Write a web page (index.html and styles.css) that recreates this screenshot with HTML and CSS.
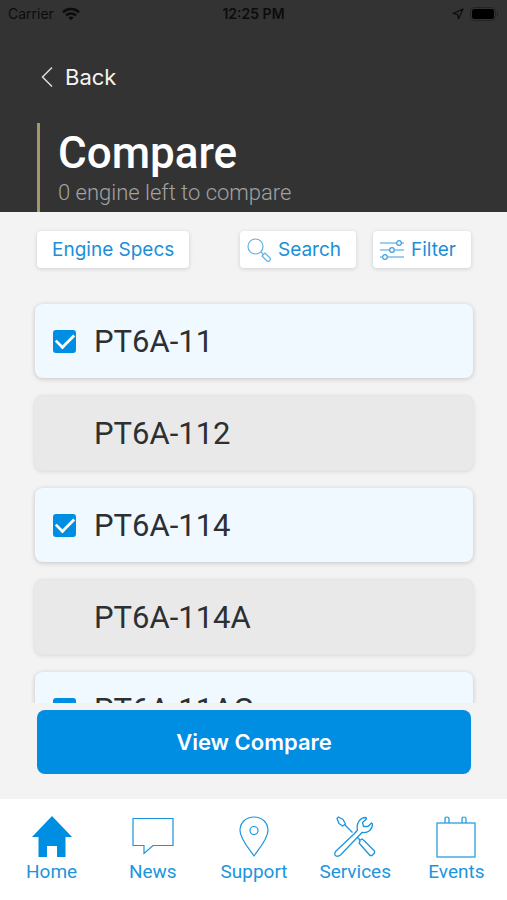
FILE: index.html
```html
<!DOCTYPE html>
<html lang="en">
<head>
    <meta charset="UTF-8">
    <meta name="viewport" content="width=device-width, initial-scale=1.0">
    <title>Compare</title>
    <link rel="stylesheet" href="styles.css">
</head>
<body>
    <header class="header">
        <div class="status-bar">
            <div class="status-left">
                <span>Carrier</span>
                <svg width="18" height="14" viewBox="0 0 18 14" fill="none" stroke="#0c0c0c" stroke-width="2.6">
                    <path d="M1 5.2C5.5 1 12.5 1 17 5.2"/>
                    <path d="M4 8.4C6.8 5.8 11.2 5.8 14 8.4"/>
                    <path d="M6.3 10.4C7.8 9.2 10.2 9.2 11.7 10.4L9 13.2Z" fill="#0c0c0c" stroke="none"/>
                </svg>
            </div>
            <div class="status-time">12:25 PM</div>
            <div class="status-right">
                <svg width="12" height="12" viewBox="0 0 12 12" fill="none" stroke="#0c0c0c" stroke-width="1.2" stroke-linejoin="round">
                    <path d="M11 1L1 5.5L5.6 6.4L6.5 11Z"/>
                </svg>
                <svg width="29" height="14" viewBox="0 0 29 14">
                    <rect x="0.5" y="0.5" width="25" height="13" rx="4" fill="none" stroke="#242424"/>
                    <rect x="2" y="2" width="22" height="10" rx="2.5" fill="#000"/>
                    <path d="M27 4.5C28.6 5.3 28.6 8.7 27 9.5Z" fill="#242424"/>
                </svg>
            </div>
        </div>
        <a class="back" href="#">
            <svg width="12" height="22" viewBox="0 0 12 22" fill="none" stroke="#ddd" stroke-width="1.5">
                <path d="M11 1.5L1.5 11L11 20.5"/>
            </svg>
            Back
        </a>
        <div class="heading">
            <h1>Compare</h1>
            <p>0 engine left to compare</p>
        </div>
    </header>

    <main class="content">
        <div class="toolbar">
            <button class="tool tool-specs">Engine Specs</button>
            <button class="tool">
                <svg width="24" height="24" viewBox="0 0 24 24" fill="none" stroke="#5fb2e6" stroke-width="1.2">
                    <circle cx="8.5" cy="8.5" r="7.5"/>
                    <path d="M13.8 13.8L16.5 16.5"/>
                    <path d="M15 18L18 15L23 20Q24 21.2 22.7 22.7Q21.200 24 20 23Z"/>
                </svg>
                Search
            </button>
            <button class="tool">
                <svg width="24" height="20" viewBox="0 0 24 20" fill="#fff" stroke="#3aa0e0" stroke-width="1.2">
                    <path d="M0 3H24M0 10H24M0 17H24"/>
                    <circle cx="19" cy="3" r="2.3"/>
                    <circle cx="12" cy="10" r="2.3"/>
                    <circle cx="5" cy="17" r="2.3"/>
                </svg>
                Filter
            </button>
        </div>

        <div class="engine-list">
            <label class="engine"><input type="checkbox" checked>PT6A-11</label>
            <label class="engine"><input type="checkbox">PT6A-112</label>
            <label class="engine"><input type="checkbox" checked>PT6A-114</label>
            <label class="engine"><input type="checkbox">PT6A-114A</label>
            <label class="engine"><input type="checkbox" checked>PT6A-11AG</label>
        </div>

        <button class="view-compare">View Compare</button>
    </main>

    <nav class="tabs">
        <a href="#">
            <svg width="42" height="42" viewBox="0 0 42 42" fill="#008ee3">
                <path d="M21 0L41 21H34.5V41H26V30H16V41H7.5V21H1Z"/>
            </svg>
            Home
        </a>
        <a href="#">
            <svg width="42" height="42" viewBox="0 0 42 42" fill="none" stroke="#1c95de" stroke-width="1.2">
                <path d="M1 2.5H41V29.5H21L12 37.5V29.5H1Z"/>
            </svg>
            News
        </a>
        <a href="#">
            <svg width="42" height="42" viewBox="0 0 42 42" fill="none" stroke="#1c95de" stroke-width="1.2">
                <path d="M21 40C17 34 7 23 7 14.5C7 6.5 13 1 21 1S35 6.5 35 14.5C35 23 25 34 21 40Z"/>
                <circle cx="21" cy="14.5" r="4"/>
            </svg>
            Support
        </a>
        <a href="#">
            <svg width="42" height="42" viewBox="0 0 42 42" fill="none" stroke="#1c95de" stroke-width="1.3" stroke-linejoin="round">
                <path d="M4.5 1L9 3.5L11.5 8L8.5 10L5 7.5L3 2.5Z"/>
                <path d="M10.5 8.5L18.5 16.5M23 21L26 24"/>
                <path d="M1.5 35.500L20 18L23.500 14C22 7 26 1.500 32 1.500L32.500 3L28.500 6.500L29.500 10.500L34 10.500L37.500 7L38.500 8C38.500 13.500 34 17.500 28 16.500L7 38.500C3.500 41.500 -1 40.500 1.500 35.500Z"/>
                <path d="M25 27L26 25.500L25.500 24.500L28 23L30 24.500L40.500 35V37L38 39.500H36Z"/>
            </svg>
            Services
        </a>
        <a href="#">
            <svg width="42" height="42" viewBox="0 0 42 42" fill="none" stroke="#1c95de" stroke-width="1.2">
                <rect x="2" y="7" width="38" height="34"/>
                <path d="M10 7V3Q10 1 12 1T14 3V7M27 7V3Q27 1 29 1T31 3V7"/>
            </svg>
            Events
        </a>
    </nav>
</body>
</html>
```

FILE: styles.css
```css
* { box-sizing: border-box; }
body { margin: 0; height: 100vh; display: flex; flex-direction: column; background-color: #f3f3f3; color: #2c3032; font-family: Roboto, sans-serif; }
button { border: none; cursor: pointer; font-family: Inter, sans-serif; }
a { text-decoration: none; }
svg { flex: none; }

.header { background-color: #333; }
.status-bar { display: grid; grid-template-columns: 1fr auto 1fr; align-items: center; height: 27px; padding: 0 8px; font-family: Inter, sans-serif; font-size: 14px; color: #0c0c0c; }
.status-left { display: flex; align-items: center; gap: 8px; }
.status-time { font-weight: 600; }
.status-right { display: flex; align-items: center; justify-content: flex-end; gap: 6px; }
.back { display: flex; align-items: center; gap: 12px; width: fit-content; margin: 36px 0 32px 41px; line-height: 28px; font-family: Inter, sans-serif; font-size: 22px; color: #f4f4f4; }
.heading { margin-left: 37px; padding: 4px 0 5px 18px; border-left: 3px solid #a6966a; }
.heading h1 { margin: 0; font-size: 44px; font-weight: 500; line-height: 52px; color: #fff; }
.heading p { margin: 0; font-size: 22px; font-weight: 300; line-height: 28px; color: #a2a2a2; }

.content { flex: 1; min-height: 0; display: flex; flex-direction: column; }
.toolbar { display: flex; gap: 17px; padding: 19px 36px 14px 37px; }
.tool { display: flex; align-items: center; justify-content: center; gap: 7px; height: 37px; padding: 0 15px 0 7px; border-radius: 4px; background-color: #fff; box-shadow: 0 1px 4px rgba(0, 0, 0, 0.15); font-size: 19px; color: #1a8fd8; }
.tool-specs { margin-right: auto; padding: 0 15px; }

.engine-list { flex: 1; min-height: 0; overflow: hidden; display: flex; flex-direction: column; gap: 18px; padding: 22px 34px 0 35px; }
.engine { flex: none; display: flex; align-items: center; gap: 18px; height: 74px; padding: 0 18px; border-radius: 8px; background-color: #e9e9e9; box-shadow: 0 0 0 1px #e6e6e6, 0 1px 5px rgba(0, 0, 0, 0.15); font-size: 31px; }
.engine:has(input:checked) { background-color: #eff9ff; box-shadow: 0 1px 5px rgba(0, 0, 0, 0.2); }
.engine input { appearance: none; width: 23px; height: 23px; margin: 0; border-radius: 3px; }
.engine input:checked { display: grid; place-items: center; background-color: #008ee3; }
.engine input:checked::before { content: ""; width: 17px; height: 9px; margin-bottom: 5px; border-left: 3px solid #fff; border-bottom: 3px solid #fff; transform: rotate(-45deg) scale(0.9); }

.view-compare { height: 64px; margin: 7px 36px 25px 37px; border-radius: 8px; background-color: #008ee3; font-size: 22px; font-weight: 600; color: #fff; }

.tabs { display: grid; grid-template-columns: repeat(5, 1fr); height: 101px; padding: 17px 0 0 1px; background-color: #fff; }
.tabs a { display: flex; flex-direction: column; align-items: center; gap: 2px; font-size: 19px; line-height: 24px; color: #1c95de; }
```
